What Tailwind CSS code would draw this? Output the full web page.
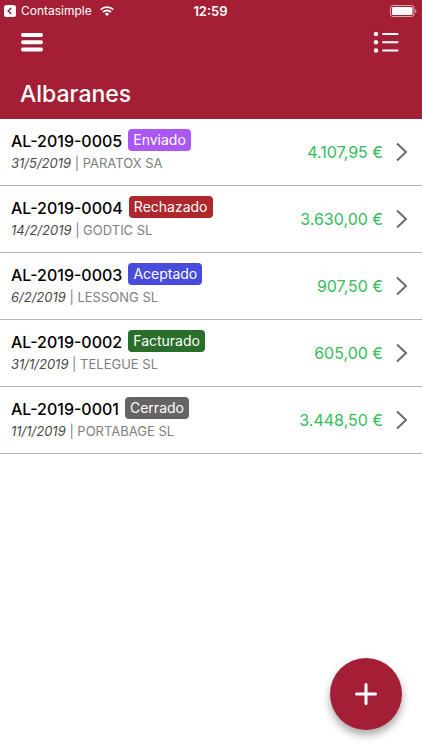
<!DOCTYPE html>
<html lang="es">
<head>
    <meta charset="UTF-8">
    <meta name="viewport" content="width=device-width, initial-scale=1.0">
    <title>Albaranes</title>
    <script src="https://cdn.jsdelivr.net/npm/@tailwindcss/browser@4"></script>
</head>
<body class="bg-white font-['Inter','Liberation_Sans',sans-serif]">
<div class="min-h-screen">
    <!-- Header -->
    <header class="bg-[#a41f35] text-white pb-[9px]">
        <!-- Status bar -->
        <div class="grid grid-cols-3 items-center h-[22px] pl-1 pr-[5px]">
            <div class="flex items-center">
                <a href="#" class="flex items-center gap-[5px] text-[12px] leading-4">
                    <svg class="w-3 h-3" viewBox="0 0 12 12"><rect width="12" height="12" rx="2.5" fill="#fff"/><path d="M7.2 3L4.2 6l3 3" fill="none" stroke="#a41f35" stroke-width="1.5"/></svg>
                    Contasimple
                </a>
                <svg class="w-[14px] h-[10px] ml-2 shrink-0" viewBox="0 0 14 10" fill="none" stroke="#fff" stroke-width="1.8"><path d="M.7 3.7a9 9 0 0 1 12.6 0"/><path d="M3 6.1a5.8 5.8 0 0 1 8 0"/><path d="M7 10L4.9 7.9a3 3 0 0 1 4.2 0z" fill="#fff" stroke="none"/></svg>
            </div>
            <span class="text-center text-[13px] leading-4 font-semibold">12:59</span>
            <svg class="w-[27px] h-[12px] justify-self-end" viewBox="0 0 27 12"><rect x=".5" y=".5" width="23.5" height="11" rx="2.5" fill="none" stroke="#fff" stroke-opacity=".6"/><rect x="2" y="2" width="20.5" height="8" rx="1.2" fill="#fff"/><path d="M25.2 4v4c1.6-.8 1.6-3.2 0-4z" fill="#fff" fill-opacity=".6"/></svg>
        </div>
        <div class="flex justify-between items-center h-10 px-5">
            <button type="button" aria-label="Menú">
                <svg class="w-6 h-5" viewBox="0 0 24 20" stroke="#fff" stroke-width="4" stroke-linecap="round"><path d="M3 3h18M3 10.3h18M3 17.6h18"/></svg>
            </button>
            <button type="button" aria-label="Filtrar" class="mr-[2px]">
                <svg class="w-[27px] h-[22px]" viewBox="0 0 27 22" stroke="#fff" stroke-width="2" stroke-linecap="round"><path d="M10 3h14.5M10 11.3h14.5M10 19.5h14.5"/><g fill="#fff" stroke="none"><circle cx="3" cy="3" r="2.2"/><circle cx="3" cy="11.3" r="2.2"/><circle cx="3" cy="19.5" r="2.2"/></g></svg>
            </button>
        </div>
        <h1 class="px-5 pt-4 text-[23px] leading-8 font-medium">Albaranes</h1>
    </header>

    <!-- Lista de albaranes -->
    <main>
        <ul>
            <li class="border-b border-[#b4b4b4]">
                <a href="#" class="flex justify-between items-center h-[66px] pl-[11px] pr-3">
                    <div class="pb-[2px]">
                        <div class="flex items-start gap-[6px]">
                            <span class="text-[16px] leading-6 font-medium text-black">AL-2019-0005</span>
                            <span class="rounded-[4px] bg-[#ab57f3] px-[5px] text-[14px] leading-[22px] text-white">Enviado</span>
                        </div>
                        <p class="text-[13px] leading-5 text-[#808080]"><i class="text-[#484848]">31/5/2019</i> | PARATOX SA</p>
                    </div>
                    <div class="flex items-center gap-[11px]">
                        <span class="text-[16px] leading-6 text-[#35bd5c]">4.107,95 €</span>
                        <svg class="w-4 h-5" viewBox="0 0 16 20" fill="none" stroke="#6c6c6c" stroke-width="2"><path d="M3 1.5l9 8.5-9 8.5"/></svg>
                    </div>
                </a>
            </li>
            <li class="border-b border-[#b4b4b4]">
                <a href="#" class="flex justify-between items-center h-[66px] pl-[11px] pr-3">
                    <div class="pb-[2px]">
                        <div class="flex items-start gap-[6px]">
                            <span class="text-[16px] leading-6 font-medium text-black">AL-2019-0004</span>
                            <span class="rounded-[4px] bg-[#ae272b] px-[5px] text-[14px] leading-[22px] text-white">Rechazado</span>
                        </div>
                        <p class="text-[13px] leading-5 text-[#808080]"><i class="text-[#484848]">14/2/2019</i> | GODTIC SL</p>
                    </div>
                    <div class="flex items-center gap-[11px]">
                        <span class="text-[16px] leading-6 text-[#35bd5c]">3.630,00 €</span>
                        <svg class="w-4 h-5" viewBox="0 0 16 20" fill="none" stroke="#6c6c6c" stroke-width="2"><path d="M3 1.5l9 8.5-9 8.5"/></svg>
                    </div>
                </a>
            </li>
            <li class="border-b border-[#b4b4b4]">
                <a href="#" class="flex justify-between items-center h-[66px] pl-[11px] pr-3">
                    <div class="pb-[2px]">
                        <div class="flex items-start gap-[6px]">
                            <span class="text-[16px] leading-6 font-medium text-black">AL-2019-0003</span>
                            <span class="rounded-[4px] bg-[#484bdc] px-[5px] text-[14px] leading-[22px] text-white">Aceptado</span>
                        </div>
                        <p class="text-[13px] leading-5 text-[#808080]"><i class="text-[#484848]">6/2/2019</i> | LESSONG SL</p>
                    </div>
                    <div class="flex items-center gap-[11px]">
                        <span class="text-[16px] leading-6 text-[#35bd5c]">907,50 €</span>
                        <svg class="w-4 h-5" viewBox="0 0 16 20" fill="none" stroke="#6c6c6c" stroke-width="2"><path d="M3 1.5l9 8.5-9 8.5"/></svg>
                    </div>
                </a>
            </li>
            <li class="border-b border-[#b4b4b4]">
                <a href="#" class="flex justify-between items-center h-[66px] pl-[11px] pr-3">
                    <div class="pb-[2px]">
                        <div class="flex items-start gap-[6px]">
                            <span class="text-[16px] leading-6 font-medium text-black">AL-2019-0002</span>
                            <span class="rounded-[4px] bg-[#296e2a] px-[5px] text-[14px] leading-[22px] text-white">Facturado</span>
                        </div>
                        <p class="text-[13px] leading-5 text-[#808080]"><i class="text-[#484848]">31/1/2019</i> | TELEGUE SL</p>
                    </div>
                    <div class="flex items-center gap-[11px]">
                        <span class="text-[16px] leading-6 text-[#35bd5c]">605,00 €</span>
                        <svg class="w-4 h-5" viewBox="0 0 16 20" fill="none" stroke="#6c6c6c" stroke-width="2"><path d="M3 1.5l9 8.5-9 8.5"/></svg>
                    </div>
                </a>
            </li>
            <li class="border-b border-[#b4b4b4]">
                <a href="#" class="flex justify-between items-center h-[66px] pl-[11px] pr-3">
                    <div class="pb-[2px]">
                        <div class="flex items-start gap-[6px]">
                            <span class="text-[16px] leading-6 font-medium text-black">AL-2019-0001</span>
                            <span class="rounded-[4px] bg-[#656565] px-[5px] text-[14px] leading-[22px] text-white">Cerrado</span>
                        </div>
                        <p class="text-[13px] leading-5 text-[#808080]"><i class="text-[#484848]">11/1/2019</i> | PORTABAGE SL</p>
                    </div>
                    <div class="flex items-center gap-[11px]">
                        <span class="text-[16px] leading-6 text-[#35bd5c]">3.448,50 €</span>
                        <svg class="w-4 h-5" viewBox="0 0 16 20" fill="none" stroke="#6c6c6c" stroke-width="2"><path d="M3 1.5l9 8.5-9 8.5"/></svg>
                    </div>
                </a>
            </li>
        </ul>
    </main>
</div>

<!-- Nuevo albarán -->
<button type="button" aria-label="Nuevo albarán" class="fixed right-5 bottom-5 w-[72px] h-[72px] rounded-full bg-[#a41f35] flex items-center justify-center shadow-[0_5px_9px_rgba(0,0,0,0.35)]">
    <svg class="w-6 h-6" viewBox="0 0 24 24" stroke="#fff" stroke-width="3" stroke-linecap="round"><path d="M12 2.5v19M2.5 12h19"/></svg>
</button>
</body>
</html>
